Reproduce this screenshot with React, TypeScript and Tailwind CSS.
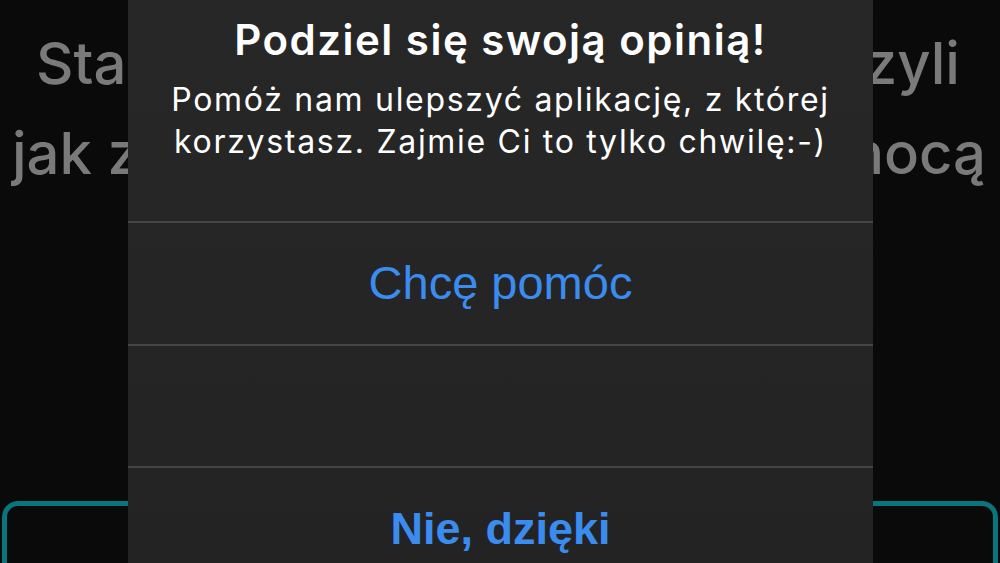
import React from "react";

const inter = "font-['Inter','Noto_Sans',sans-serif]";
const arial = "font-['Liberation_Sans',Arial,sans-serif]";

export default function App() {
  return (
    <div className={`relative w-[1000px] h-[563px] overflow-hidden bg-[#0a0a0a] ${inter}`}>
      {/* Page behind the sheet */}
      <div className="flex flex-col h-full">
        <div className="pt-[18px] text-[58px] leading-[90px] font-medium text-[#7a7a7a]">
          <div className="flex justify-between pl-[36px] pr-[40px]">
            <span>Stań</span>
            <span>czyli</span>
          </div>
          <div className="flex justify-between pl-[12px] pr-[14px]">
            <span>jak z</span>
            <span>mocą</span>
          </div>
        </div>
        <div className="mt-auto mx-[2px] h-[64px] -mb-[2px] border-[5px] border-b-0 border-[#08767c] rounded-t-[16px]" />
      </div>

      {/* Alert sheet */}
      <div className="absolute left-[128px] top-0 w-[745px] h-[620px] rounded-b-[28px] bg-gradient-to-b from-[#272727] to-[#232323]">
        <div className="flex flex-col items-center text-center pt-[15px] h-[221px]">
          <h2 className="text-[42px] leading-[50px] font-semibold tracking-[1.5px] text-white">Podziel się swoją opinią!</h2>
          <p className="mt-[14px] text-[32px] leading-[42px] tracking-[1.7px] text-white">
            Pomóż nam ulepszyć aplikację, z której
            <br />
            korzystasz. Zajmie Ci to tylko chwilę:-)
          </p>
        </div>
        <div className="h-[2px] bg-[#454545]" />
        <div className={`h-[121px] flex items-center justify-center text-[47px] text-[#3b8cf0] ${arial}`}>
          Chcę pomóc
        </div>
        <div className="h-[2px] bg-[#454545]" />
        <div className="h-[120px]" />
        <div className="h-[2px] bg-[#454545]" />
        <div className={`h-[122px] flex items-center justify-center text-[45px] font-bold text-[#3b8cf0] ${arial}`}>
          Nie, dzięki
        </div>
      </div>
    </div>
  );
}
